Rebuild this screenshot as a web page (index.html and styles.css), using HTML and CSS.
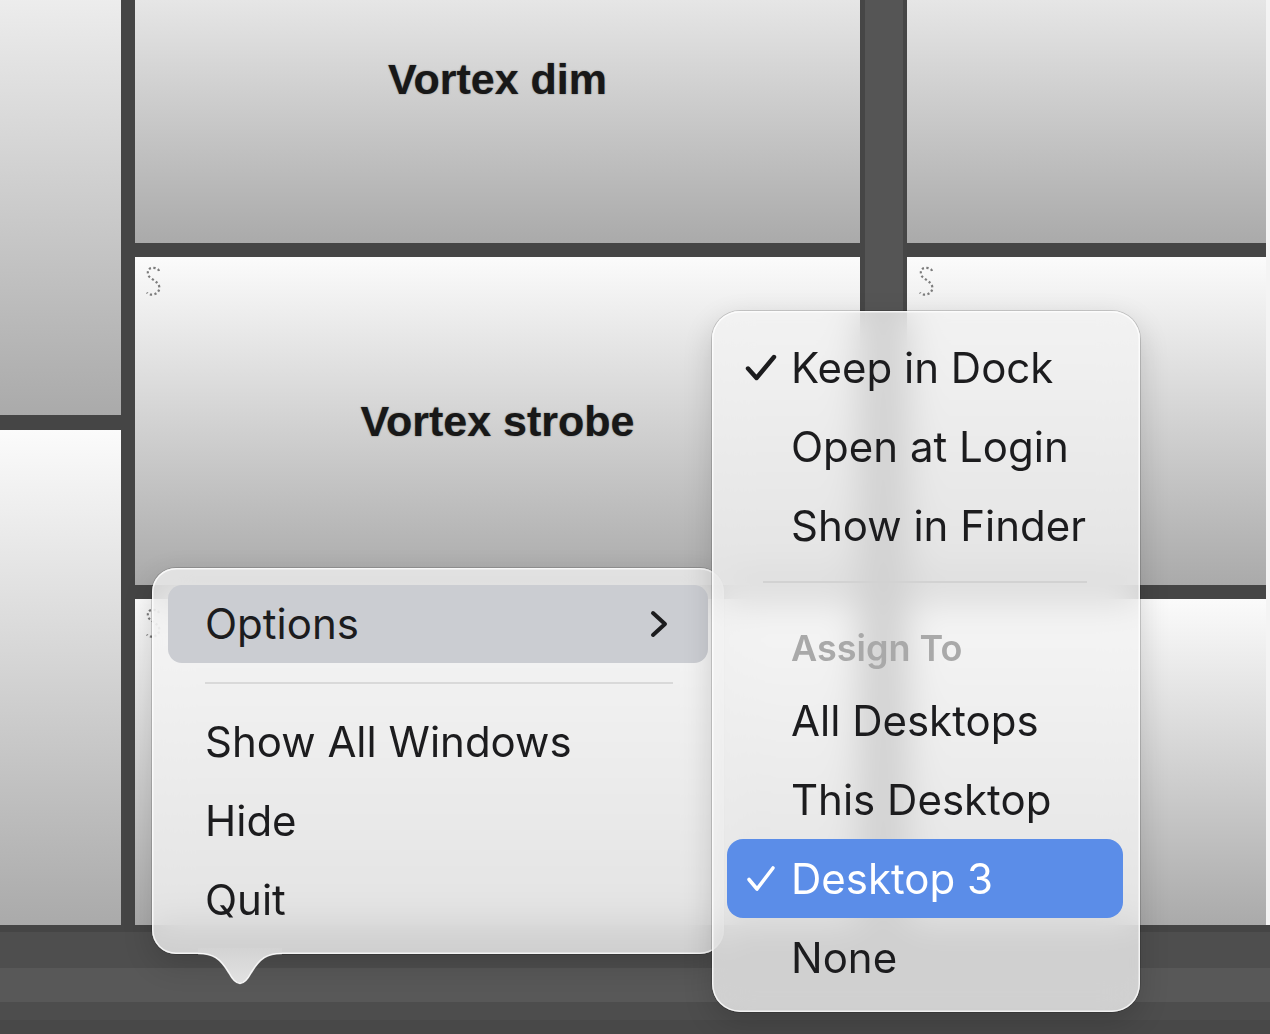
FILE: index.html
```html
<!DOCTYPE html>
<html>
<head>
<meta charset="utf-8">
<title>Dock menu</title>
<link rel="stylesheet" href="styles.css">
</head>
<body>
<div class="screen">
  <div class="wall">
    <div class="col col-a">
      <div class="tile t-a1"></div>
      <div class="tile t-a2"></div>
    </div>
    <div class="gutter"></div>
    <div class="col col-b">
      <div class="tile t-r"><span class="title">Vortex dim</span></div>
      <div class="tile t-r">
        <svg class="handle" viewBox="0 0 17 31"><path d="M14 5 C13 2 9 1.5 6.5 2 C3 2.6 2 6 3.5 9.5 C5 13 13 15 14.2 20.5 C15.3 26 10 29.5 5 28.5 C3.5 28.2 2.5 27.5 2 26.5"/></svg>
        <span class="title">Vortex strobe</span>
      </div>
      <div class="tile t-r3">
        <svg class="handle" viewBox="0 0 17 31"><path d="M14 5 C13 2 9 1.5 6.5 2 C3 2.6 2 6 3.5 9.5 C5 13 13 15 14.2 20.5 C15.3 26 10 29.5 5 28.5 C3.5 28.2 2.5 27.5 2 26.5"/></svg>
      </div>
    </div>
    <div class="stripe"></div>
    <div class="col col-c">
      <div class="tile t-r"></div>
      <div class="tile t-r">
        <svg class="handle handle-c" viewBox="0 0 17 31"><path d="M14 5 C13 2 9 1.5 6.5 2 C3 2.6 2 6 3.5 9.5 C5 13 13 15 14.2 20.5 C15.3 26 10 29.5 5 28.5 C3.5 28.2 2.5 27.5 2 26.5"/></svg>
      </div>
      <div class="tile t-r3"></div>
    </div>
    <div class="edge"></div>
  </div>
  <div class="dock"></div>

  <div class="menu menu-main">
    <div class="row row-options">
      <span>Options</span>
      <svg class="chevron" viewBox="0 0 18 28"><polyline points="3,3 15,14 3,25"/></svg>
    </div>
    <div class="sep"></div>
    <div class="row">Show All Windows</div>
    <div class="row">Hide</div>
    <div class="row">Quit</div>
  </div>
  <svg class="menu-tail" viewBox="0 0 84 40">
    <defs>
      <linearGradient id="tailg" x1="0" y1="0" x2="0" y2="1">
        <stop offset="0" stop-color="#d3d3d3"/>
        <stop offset="1" stop-color="#e2e2e2"/>
      </linearGradient>
    </defs>
    <path class="tail-fill" d="M0 0 L0 5.5 C15 5.5 22 10 31 25 Q42 46 53 25 C62 10 69 5.5 84 5.5 L84 0 Z"/>
    <path class="tail-edge" d="M0 5.5 C15 5.5 22 10 31 25 Q42 46 53 25 C62 10 69 5.5 84 5.5"/>
  </svg>

  <div class="menu menu-sub">
    <div class="sub-row">
      <span class="check-slot"><svg class="check" viewBox="0 0 32 28"><polyline points="3,14.5 11.5,24 29,3"/></svg></span>
      <span>Keep in Dock</span>
    </div>
    <div class="sub-row"><span class="check-slot"></span><span>Open at Login</span></div>
    <div class="sub-row"><span class="check-slot"></span><span>Show in Finder</span></div>
    <div class="sub-sep"></div>
    <div class="sub-head">Assign To</div>
    <div class="sub-row"><span class="check-slot"></span><span>All Desktops</span></div>
    <div class="sub-row"><span class="check-slot"></span><span>This Desktop</span></div>
    <div class="sub-row selected">
      <span class="check-slot"><svg class="check check-light" viewBox="0 0 32 28"><polyline points="4,14.5 12,24 28,3"/></svg></span>
      <span>Desktop 3</span>
    </div>
    <div class="sub-row"><span class="check-slot"></span><span>None</span></div>
  </div>
</div>
</body>
</html>
```

FILE: styles.css
```css
* {
  box-sizing: border-box;
  margin: 0;
  padding: 0;
}

html,
body {
  width: 1270px;
  height: 1034px;
  overflow: hidden;
}

body {
  background: #454545;
  font-family: "Inter", "Noto Sans", sans-serif;
}

.screen {
  position: relative;
  width: 1270px;
  height: 1034px;
  overflow: hidden;
}

/* ---------- background wall of tiles ---------- */
.wall {
  display: flex;
  align-items: flex-end;
  height: 925px;
  overflow: hidden;
}

.col {
  display: flex;
  flex-direction: column;
  flex: none;
}

.col-a {
  width: 121px;
  gap: 15px;
}

.gutter {
  width: 14px;
  flex: none;
  align-self: stretch;
  background: #454545;
}

.col-b {
  width: 725px;
  gap: 14px;
}

.stripe {
  width: 47px;
  flex: none;
  align-self: stretch;
  background: #555555;
  border-left: 5px solid #464646;
  border-right: 4px solid #464646;
}

.col-c {
  width: 359px;
  gap: 14px;
}

.edge {
  width: 4px;
  flex: none;
  align-self: stretch;
  background: #f4f4f4;
}

.tile {
  display: grid;
  background: linear-gradient(#fbfbfb, #aaaaaa);
}

.tile > * {
  grid-area: 1 / 1;
}

.t-a1 {
  height: 506px;
}

.t-a2 {
  height: 495px;
}

.t-r {
  height: 328px;
}

.t-r3 {
  height: 326px;
}

.title {
  place-self: center;
  font-family: "Liberation Sans", Arial, sans-serif;
  font-weight: bold;
  font-size: 43px;
  color: #181818;
  text-shadow: 0 0 1.5px rgba(0, 0, 0, 0.5);
}

.handle {
  justify-self: start;
  align-self: start;
  width: 17px;
  height: 31px;
  margin: 9px 0 0 10px;
  fill: none;
  stroke: #7c7c7c;
  stroke-width: 2.2;
  stroke-dasharray: 2.2 2.4;
}

.handle-c {
  margin-left: 11px;
}

.dock {
  height: 109px;
  background: linear-gradient(
    #454545 0 7px,
    #4e4e4e 7px 43px,
    #585858 43px 77px,
    #4d4d4d 77px 95px,
    #484848 95px
  );
}

/* ---------- menus ---------- */
.menu {
  position: absolute;
  border-radius: 24px;
  background: rgba(243, 243, 243, 0.78);
  backdrop-filter: blur(18px);
  -webkit-backdrop-filter: blur(18px);
  box-shadow: 0 0 0 1px rgba(0, 0, 0, 0.16),
    inset 0 0 0 1.5px rgba(255, 255, 255, 0.75),
    0 10px 30px rgba(0, 0, 0, 0.16);
  color: #1c1c1e;
  font-size: 42px;
  line-height: 1;
}

.menu-main {
  left: 152px;
  top: 568px;
  width: 572px;
  height: 386px;
  padding: 17px 16px 15px;
}

.row {
  height: 79px;
  display: flex;
  align-items: center;
  padding-left: 37px;
}

.row-options {
  height: 78px;
  justify-content: space-between;
  padding: 0 40px 0 37px;
  background: #cbcdd2;
  border-radius: 14px;
}

.chevron {
  width: 18px;
  height: 28px;
  fill: none;
  stroke: #1c1c1e;
  stroke-width: 4;
  stroke-linecap: round;
  stroke-linejoin: round;
}

.sep {
  height: 39px;
  display: flex;
  align-items: center;
  padding: 0 35px 0 37px;
}

.sep::before {
  content: "";
  flex: 1;
  height: 2px;
  background: #d9d9d9;
}

.menu-tail {
  position: absolute;
  left: 198px;
  top: 948px;
  width: 84px;
  height: 40px;
}

.tail-fill {
  fill: url(#tailg);
}

.tail-edge {
  fill: none;
  stroke: rgba(255, 255, 255, 0.9);
  stroke-width: 1.6;
}

.menu-sub {
  left: 712px;
  top: 311px;
  width: 428px;
  height: 701px;
  padding: 17px 17px 14px 15px;
  border-radius: 28px;
}

.sub-row {
  height: 79px;
  display: flex;
  align-items: center;
  padding-left: 18px;
}

.check-slot {
  width: 46px;
  flex: none;
  display: flex;
  align-items: center;
}

.check {
  width: 32px;
  height: 28px;
  fill: none;
  stroke: #1c1c1e;
  stroke-width: 4.4;
  stroke-linecap: round;
  stroke-linejoin: round;
}

.check-light {
  stroke: #ffffff;
  stroke-width: 3.6;
}

.sub-row.selected {
  background: #5b8de8;
  color: #ffffff;
  border-radius: 16px;
}

.sub-sep {
  height: 34px;
  display: flex;
  align-items: center;
  padding: 0 36px;
}

.sub-sep::before {
  content: "";
  flex: 1;
  height: 2px;
  background: #d2d2d2;
}

.sub-head {
  height: 82px;
  display: flex;
  align-items: center;
  padding: 16px 0 0 64px;
  color: #a9a9a9;
  font-weight: 600;
  font-size: 36px;
}
```
